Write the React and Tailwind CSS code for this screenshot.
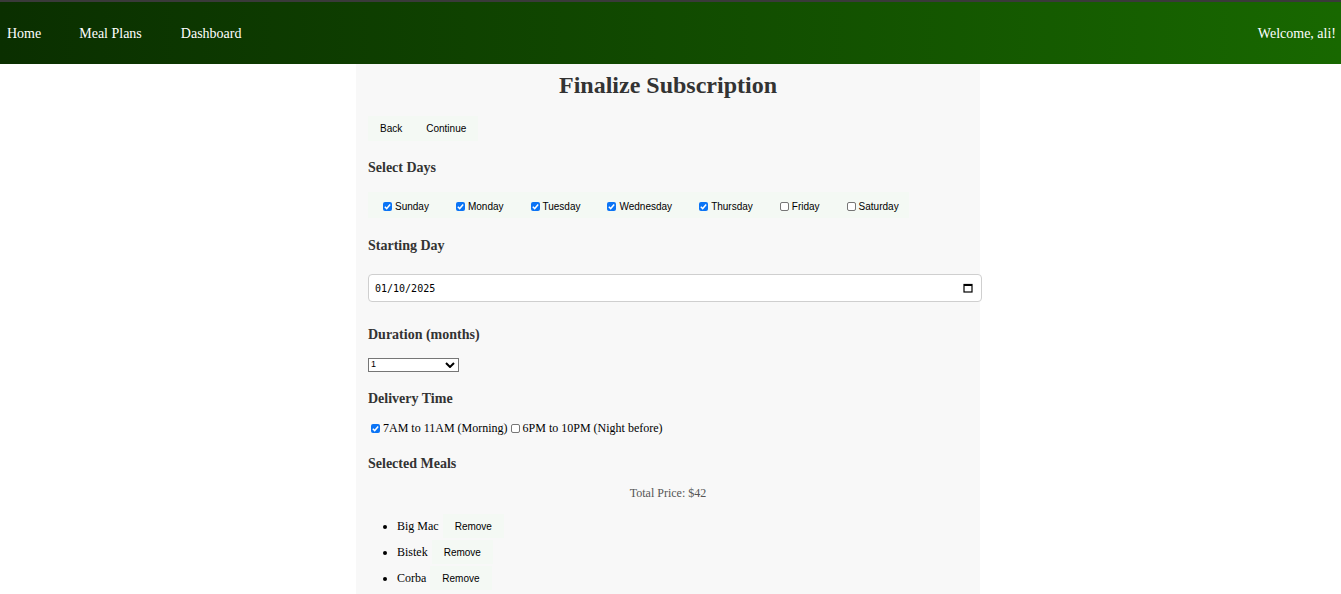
import React from "react";

const serif = { fontFamily: '"Liberation Serif", "Times New Roman", serif' };
const sans = { fontFamily: '"Liberation Sans", Arial, sans-serif' };

function Check({ checked }) {
  return (
    <span
      className={
        "inline-block w-[9px] h-[9px] rounded-[2px] shrink-0 relative " +
        (checked ? "bg-[#0b74f5]" : "border border-[#767676] bg-white")
      }
    >
      {checked && (
        <svg viewBox="0 0 10 10" className="absolute inset-0 w-[9px] h-[9px]">
          <path d="M2 5.2 L4.1 7.3 L8 2.8" fill="none" stroke="white" strokeWidth="1.6" />
        </svg>
      )}
    </span>
  );
}

const days = [
  ["Sunday", true],
  ["Monday", true],
  ["Tuesday", true],
  ["Wednesday", true],
  ["Thursday", true],
  ["Friday", false],
  ["Saturday", false],
];

const meals = ["Big Mac", "Bistek", "Corba"];

export default function App() {
  return (
    <div className="w-[1341px] min-h-[594px] bg-white" style={serif}>
      <nav className="h-[64px] border-t-2 border-[#3a3a3a] bg-gradient-to-r from-[#0a2f00] to-[#186800] flex items-center justify-between text-white text-[14px] pl-[7px] pr-[5px]">
        <div className="flex items-center">
          <a className="mr-[38px]">Home</a>
          <a className="mr-[39px]">Meal Plans</a>
          <a>Dashboard</a>
        </div>
        <span>Welcome, ali!</span>
      </nav>
      <div className="w-[1336px] flex justify-center">
        <div className="w-[624px] bg-[#f8f8f8] px-[12px] pt-[7px] pb-[4px] flex flex-col items-start text-[#333]">
          <h2 className="self-stretch text-center text-[24px] font-bold leading-[28px]">Finalize Subscription</h2>
          <div className="mt-[17px] flex bg-[#f4f9f4] text-[10px] text-black" style={sans}>
            <button className="h-[25px] px-[12px]">Back</button>
            <button className="h-[25px] px-[12px]">Continue</button>
          </div>
          <h3 className="mt-[19px] text-[14px] font-bold leading-[16px]">Select Days</h3>
          <div className="mt-[16px] h-[26px] w-[541px] bg-[#f4f9f4] flex items-center pl-[15px] gap-[27px] text-[10px] text-black" style={sans}>
            {days.map(([d, c]) => (
              <label key={d} className="flex items-center gap-[3px] mt-[2px]">
                <Check checked={c} />
                <span className="mt-[1px]">{d}</span>
              </label>
            ))}
          </div>
          <h3 className="mt-[20px] text-[14px] font-bold leading-[16px]">Starting Day</h3>
          <div className="mt-[20px] w-[614px] h-[28px] bg-white border border-[#cfcfcf] rounded-[4px] flex items-center justify-between pl-[6px] pr-[8px]">
            <span className="text-[10px] text-black" style={{ fontFamily: '"DejaVu Sans Mono", "Liberation Mono", monospace' }}>
              01/10/2025
            </span>
            <svg viewBox="0 0 10 10" className="w-[10px] h-[10px]">
              <rect x="1" y="1.5" width="8" height="7.5" fill="none" stroke="black" strokeWidth="1.2" />
              <rect x="1" y="1" width="8" height="2" fill="black" />
            </svg>
          </div>
          <h3 className="mt-[25px] text-[14px] font-bold leading-[16px]">Duration (months)</h3>
          <div className="mt-[15px] w-[91px] h-[14px] bg-white border border-[#767676] flex items-center justify-between pl-[2px] pr-[3px] text-[9px] text-black" style={sans}>
            <span>1</span>
            <svg viewBox="0 0 10 6" className="w-[10px] h-[6px]">
              <path d="M1 1 L5 5 L9 1" fill="none" stroke="black" strokeWidth="2" />
            </svg>
          </div>
          <h3 className="mt-[19px] text-[14px] font-bold leading-[16px]">Delivery Time</h3>
          <div className="mt-[14px] flex items-center text-[12px] leading-[14px] text-black pl-[3px]">
            <Check checked={true} />
            <span className="ml-[3px] mr-[3px]">7AM to 11AM (Morning)</span>
            <Check checked={false} />
            <span className="ml-[3px]">6PM to 10PM (Night before)</span>
          </div>
          <h3 className="mt-[21px] text-[14px] font-bold leading-[16px]">Selected Meals</h3>
          <p className="mt-[14px] self-stretch text-center text-[12px] leading-[14px] text-[#555]">Total Price: $42</p>
          <ul className="mt-[14px] list-disc pl-[29px] text-[12px] text-black flex flex-col gap-[2px]">
            {meals.map((m) => (
              <li key={m} className="h-[24px]">
                <div className="flex items-center h-[24px]">
                  <span>{m}</span>
                  <button className="ml-[4px] h-[24px] px-[12px] bg-[#f4f9f4] text-[10px]" style={sans}>
                    Remove
                  </button>
                </div>
              </li>
            ))}
          </ul>
        </div>
      </div>
    </div>
  );
}
